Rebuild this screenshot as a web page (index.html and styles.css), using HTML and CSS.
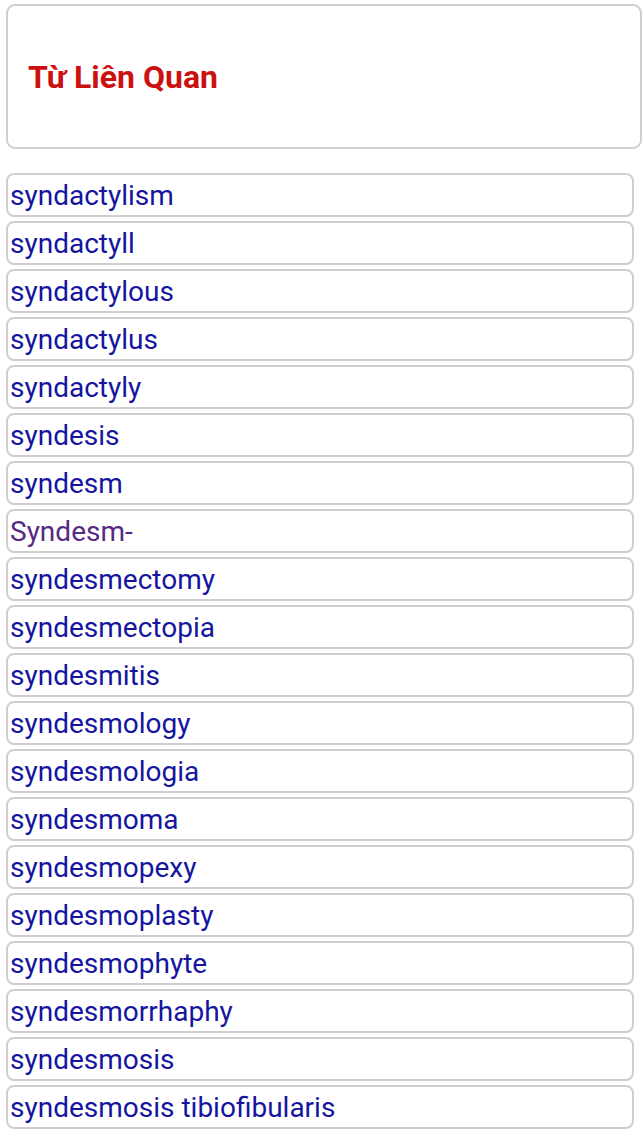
FILE: index.html
```html
<!DOCTYPE html>
<html lang="vi">
<head>
<meta charset="utf-8">
<link rel="stylesheet" href="styles.css">
</head>
<body>
<div class="header"><h2 class="title">Từ Liên Quan</h2></div>
<ul class="list">
<li class="item"><a href="#">syndactylism</a></li>
<li class="item"><a href="#">syndactyll</a></li>
<li class="item"><a href="#">syndactylous</a></li>
<li class="item"><a href="#">syndactylus</a></li>
<li class="item"><a href="#">syndactyly</a></li>
<li class="item"><a href="#">syndesis</a></li>
<li class="item"><a href="#">syndesm</a></li>
<li class="item"><a href="#" class="visited">Syndesm-</a></li>
<li class="item"><a href="#">syndesmectomy</a></li>
<li class="item"><a href="#">syndesmectopia</a></li>
<li class="item"><a href="#">syndesmitis</a></li>
<li class="item"><a href="#">syndesmology</a></li>
<li class="item"><a href="#">syndesmologia</a></li>
<li class="item"><a href="#">syndesmoma</a></li>
<li class="item"><a href="#">syndesmopexy</a></li>
<li class="item"><a href="#">syndesmoplasty</a></li>
<li class="item"><a href="#">syndesmophyte</a></li>
<li class="item"><a href="#">syndesmorrhaphy</a></li>
<li class="item"><a href="#">syndesmosis</a></li>
<li class="item"><a href="#">syndesmosis tibiofibularis</a></li>
</ul>
</body>
</html>
```
FILE: styles.css
```css
html, body {
  margin: 0;
  padding: 0;
  background: #fff;
  font-family: Roboto, "Noto Sans", sans-serif;
}
body {
  padding: 4px 0 0 6px;
  overflow: hidden;
}
.header {
  box-sizing: border-box;
  width: 636px;
  height: 145px;
  border: 2px solid #cfcfcf;
  border-radius: 9px;
  display: flex;
  align-items: center;
  padding-left: 20px;
}
.title {
  margin: 0;
  font-size: 32px;
  font-weight: 700;
  color: #cc1111;
}
.list {
  list-style: none;
  margin: 24px 0 0 0;
  padding: 0;
  width: 628px;
  display: flex;
  flex-direction: column;
  gap: 4px;
}
.item {
  box-sizing: border-box;
  height: 44px;
  border: 2px solid #cfcfcf;
  border-radius: 8px;
  padding: 0 2px;
  display: flex;
  align-items: center;
}
.item a {
  text-decoration: none;
  color: #1515a0;
  font-size: 28px;
}
.item a.visited {
  color: #562a82;
}
```
